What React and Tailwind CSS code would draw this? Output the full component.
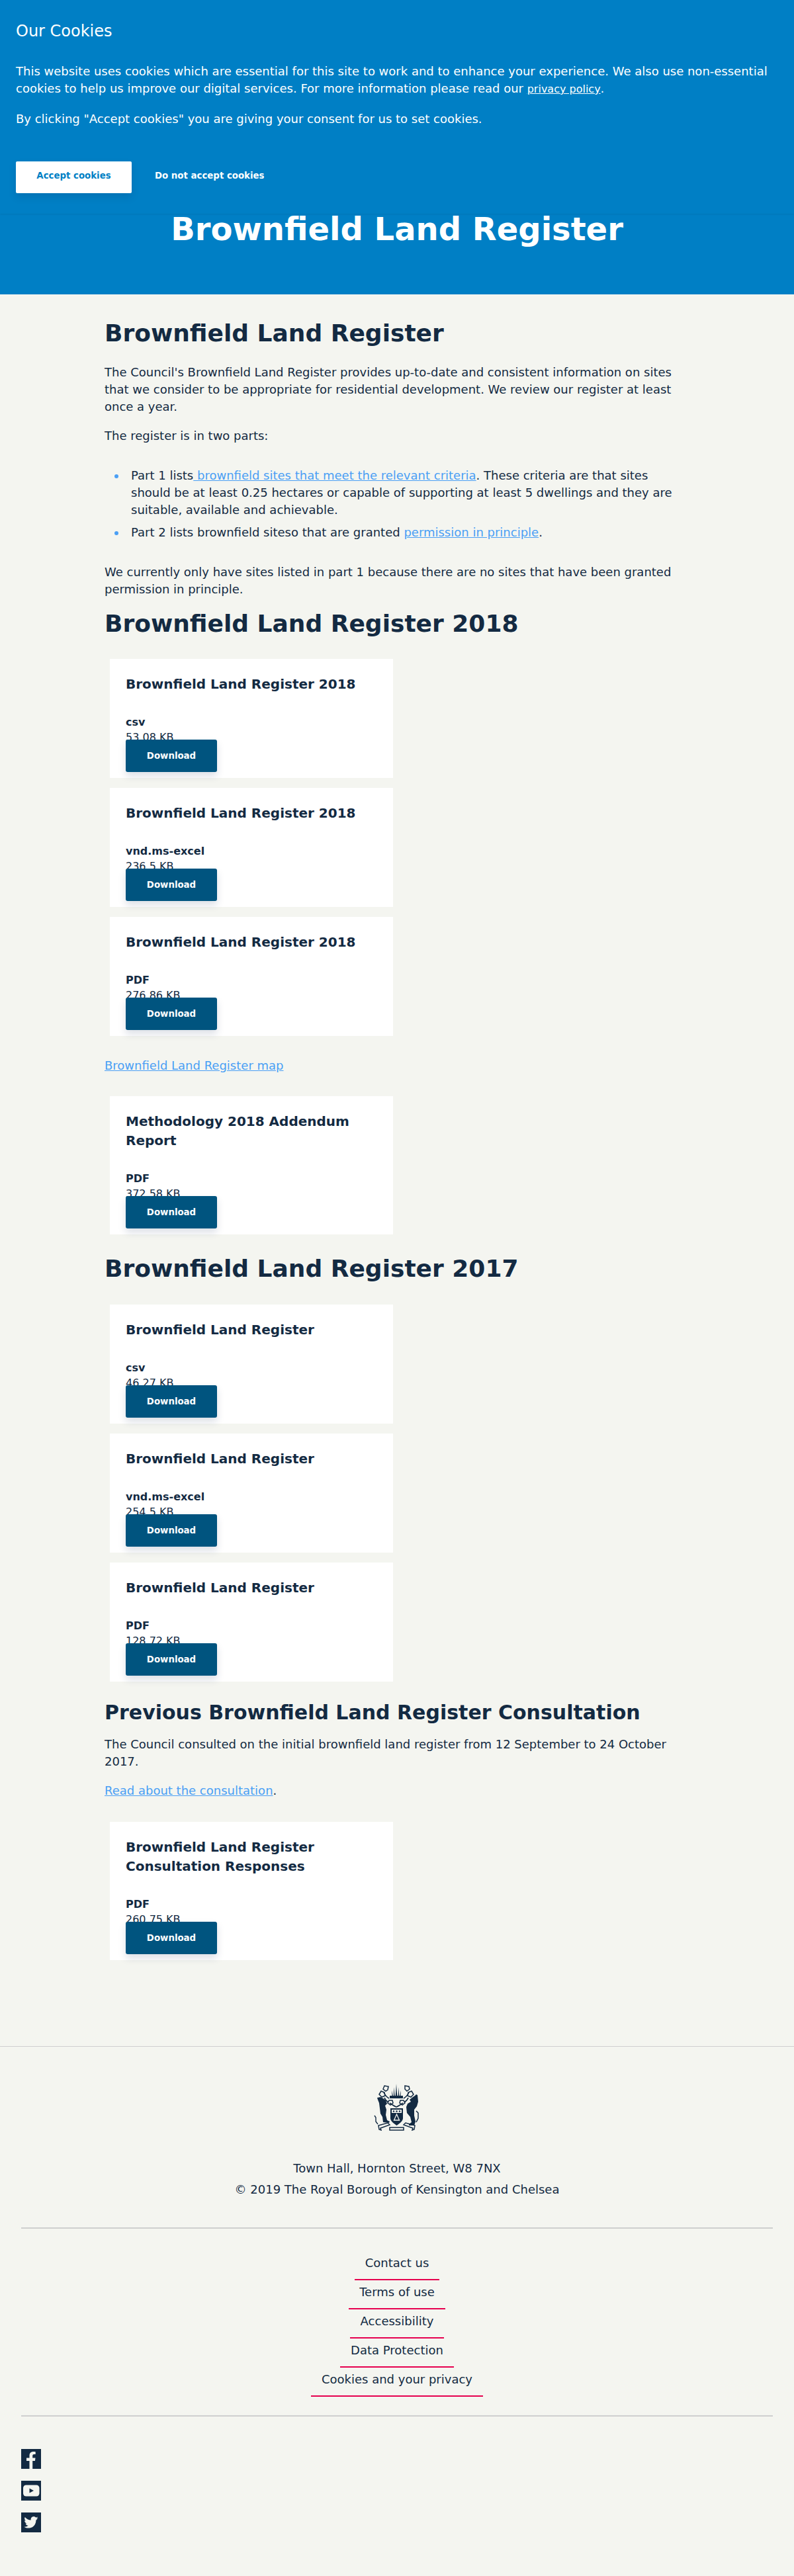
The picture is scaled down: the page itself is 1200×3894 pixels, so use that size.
import React from 'react';

const sections2018 = [
  { title: 'Brownfield Land Register 2018', type: 'csv', size: '53.08 KB' },
  { title: 'Brownfield Land Register 2018', type: 'vnd.ms-excel', size: '236.5 KB' },
  { title: 'Brownfield Land Register 2018', type: 'PDF', size: '276.86 KB' },
];

const sections2017 = [
  { title: 'Brownfield Land Register', type: 'csv', size: '46.27 KB' },
  { title: 'Brownfield Land Register', type: 'vnd.ms-excel', size: '254.5 KB' },
  { title: 'Brownfield Land Register', type: 'PDF', size: '128.72 KB' },
];

const footerLinks = ['Contact us', 'Terms of use', 'Accessibility', 'Data Protection', 'Cookies and your privacy'];

const bullet = "relative before:absolute before:top-[11px] before:left-[-25px] before:h-[6px] before:w-[6px] before:rounded-full before:bg-[#4a9ff5] before:content-['']";

function Card({ title, type, size, tall }) {
  return (
    <div className={`ml-2 w-[428px] bg-white px-6 pt-6 ${tall ? 'h-[209px]' : 'h-[180px]'}`}>
      <h3 className="text-[20px] leading-[29px] font-bold tracking-normal">{title}</h3>
      <div className="mt-[30px] text-[16px] leading-[26px] font-bold">{type}</div>
      <div className="mt-[-3px] h-[26px] text-[16px] leading-[26px]">{size}</div>
      <a className="relative mt-[-10px] flex h-[49px] w-[138px] items-center justify-center rounded-[3px] bg-[#00547f] text-[13.33px] font-bold text-white shadow-[0_6px_12px_rgba(20,40,90,0.15)]">
        Download
      </a>
    </div>
  );
}

function Crest() {
  return (
    <svg width="70" height="71" viewBox="0 0 70 71" fill="#132a42">
      {/* plume and crown */}
      <path d="M34 0l1.2 18h-2.4zM30 5l1.6 13h-1.6zM38 5l-1.6 13h1.6zM27 10l2 8h-1.4zM41 10l-2 8h1.4z" />
      <path d="M24 18h20v4H24z" />
      {/* branches */}
      <path d="M23 22c-4-2-6-5-8-9M45 22c4-2 6-5 8-9M22 28c-3-2-5-4-6-7M46 28c3-2 5-4 6-7M24 29c3 2 7 5 10 6 3-1 7-4 10-6" fill="none" stroke="#132a42" strokeWidth="1.6" />
      <path d="M16 3l6 1-1 5-3 2-4-3zM47 3l6 1 1 4-4 3-3-3zM11 11l5 2 1 5-5 2-4-4zM57 11l-5 2-1 5 5 2 4-4zM23 25l5 0 1 4-4 3-4-3zM45 25l-5 0-1 4 4 3 4-3z" fill="none" stroke="#132a42" strokeWidth="1.5" />
      {/* bear */}
      <path d="M5 21l5-1 4 2 4 3 2 5-3 3 2 6-1 8 2 8 4 2-1 2-9-1-1-8-3-5-1-8-1-8-2-5z" />
      <path d="M1 48l2 3v6l3 4" fill="none" stroke="#132a42" strokeWidth="1.4" />
      {/* lion */}
      <path d="M66 17l1 10-2 7-4 5 0 9 2 9-2 6-8 0 0-2 4-3-2-8-5-6-1-9 2-5 5-3-2-3 5-4 3-2 2-2z" />
      <path d="M64 41l3 3 0 8-3 6" fill="none" stroke="#132a42" strokeWidth="1.5" />
      {/* shield */}
      <path d="M25 37h19v15c0 4-5 8-9.500 11-4.500-3-9.500-7-9.500-11z" />
      <path d="M27 39h15v5H27z" fill="#f4f5f0" />
      <circle cx="30" cy="41.500" r="1.300" />
      <circle cx="34.500" cy="41.500" r="1.300" />
      <circle cx="39" cy="41.500" r="1.300" />
      <path d="M34.500 46l4 9h-8z" fill="none" stroke="#f4f5f0" strokeWidth="1.300" />
      {/* scroll */}
      <path d="M7 63l14-4 3 3-14 5 1 3-3-1zM62 63l-14-4-3 3 14 5-1 3 3-1zM24 66h21v4H24z" fill="none" stroke="#132a42" strokeWidth="1.500" />
    </svg>
  );
}

function FacebookIcon() {
  return (
    <svg width="30" height="30" viewBox="0 0 30 30">
      <rect width="30" height="30" fill="#132a42" />
      <path d="M12.500 30V18H8v-4.500h4.500V10c0-4 2.500-6 6-6 1.200 0 2.500.1 3.200.2v3.800h-2.200c-1.800 0-2.300 1-2.300 2.300v3.200h4.300l-.6 4.500h-3.700v12z" fill="#f4f5f0" />
    </svg>
  );
}

function YoutubeIcon() {
  return (
    <svg width="30" height="30" viewBox="0 0 30 30">
      <rect width="30" height="30" fill="#132a42" />
      <rect x="3" y="6.500" width="24.500" height="17" rx="4.500" fill="#f4f5f0" />
      <path d="M12.500 11.500l6.500 3.500-6.500 3.500z" fill="#132a42" />
    </svg>
  );
}

function TwitterIcon() {
  return (
    <svg width="30" height="30" viewBox="0 0 24 24">
      <rect width="24" height="24" fill="#132a42" />
      <path d="M20.500 6.500c-.6.3-1.300.5-2 .6.700-.4 1.300-1.100 1.500-1.900-.7.400-1.400.7-2.200.8a3.500 3.500 0 0 0-6 3.200c-2.900-.1-5.500-1.500-7.200-3.700-.9 1.600-.5 3.600 1.100 4.700-.6 0-1.100-.2-1.600-.4 0 1.700 1.200 3.100 2.800 3.500-.5.100-1 .2-1.600.1.400 1.400 1.700 2.400 3.300 2.400a7 7 0 0 1-5.200 1.500c4.700 3 11 1.500 13.400-3.200.8-1.500 1.200-3.100 1.100-4.800.6-.5 1.200-1.100 1.600-1.800z" fill="#f4f5f0" />
    </svg>
  );
}

export default function App() {
  return (
    <div className="relative min-h-[3894px] bg-[#f4f5f0] font-['DejaVu_Sans',sans-serif] text-[18px] leading-[26px] text-[#132a42]">
      {/* cookie banner sits over the page header */}
      <div className="absolute top-0 left-0 h-[323px] w-full bg-[#007fc5] px-6 pt-[30px] text-white shadow-[0_1px_2px_rgba(0,0,0,0.08)]">
        <div className="text-[24px] leading-[34px]">Our Cookies</div>
        <p className="mt-[31px]">
          This website uses cookies which are essential for this site to work and to enhance your experience. We also use non-essential cookies to help us improve our digital services. For more information please read our{' '}
          <a className="text-[16px] underline">privacy policy</a>.
        </p>
        <p className="mt-[19px]">By clicking "Accept cookies" you are giving your consent for us to set cookies.</p>
        <div className="mt-[51px] flex items-center">
          <a className="flex h-[48px] w-[175px] items-center justify-center rounded-[2px] bg-white pb-1 text-[13.33px] font-bold text-[#007fc5] shadow-[0_6px_12px_rgba(20,40,90,0.15)]">
            Accept cookies
          </a>
          <a className="ml-[35px] pb-1 text-[13.33px] font-bold">Do not accept cookies</a>
        </div>
      </div>

      <header className="flex h-[445px] items-start justify-center bg-[#007fc5] pt-[308px]">
        <h1 className="text-[48px] leading-[76px] font-bold text-white">Brownfield Land Register</h1>
      </header>

      <main className="ml-[158px] w-[860px] pt-[31px]">
        <h1 className="text-[36px] leading-[56px] font-bold">Brownfield Land Register</h1>
        <p className="mt-[18px]">
          The Council's Brownfield Land Register provides up-to-date and consistent information on sites that we consider to be appropriate for residential development. We review our register at least once a year.
        </p>
        <p className="mt-[18px]">The register is in two parts:</p>
        <ul className="mt-[34px] pl-10">
          <li className={bullet}>
            Part 1 lists<a className="text-[#4a9ff5] underline"> brownfield sites that meet the relevant criteria</a>. These criteria are that sites should be at least 0.25 hectares or capable of supporting at least 5 dwellings and they are suitable, available and achievable.
          </li>
          <li className={`mt-2 ${bullet}`}>
            Part 2 lists brownfield siteso that are granted <a className="text-[#4a9ff5] underline">permission in principle</a>.
          </li>
        </ul>
        <p className="mt-[34px]">We currently only have sites listed in part 1 because there are no sites that have been granted permission in principle.</p>
        <h2 className="mt-[11px] text-[36px] leading-[56px] font-bold">Brownfield Land Register 2018</h2>

        <div className="mt-[25px] flex flex-col gap-[15px]">
          {sections2018.map((s) => (
            <Card key={s.type} {...s} />
          ))}
        </div>
        <p className="mt-[32px]">
          <a className="text-[#4a9ff5] underline">Brownfield Land Register map</a>
        </p>
        <div className="mt-[33px]">
          <Card tall title="Methodology 2018 Addendum Report" type="PDF" size="372.58 KB" />
        </div>

        <h2 className="mt-[24px] text-[36px] leading-[56px] font-bold">Brownfield Land Register 2017</h2>
        <div className="mt-[26px] flex flex-col gap-[15px]">
          {sections2017.map((s) => (
            <Card key={s.type} {...s} />
          ))}
        </div>

        <h2 className="mt-[24px] w-[900px] text-[30px] leading-[45px] font-bold">Previous Brownfield Land Register Consultation</h2>
        <p className="mt-[13px]">The Council consulted on the initial brownfield land register from 12 September to 24 October 2017.</p>
        <p className="mt-[18px]">
          <a className="text-[#4a9ff5] underline">Read about the consultation</a>.
        </p>
        <div className="mt-[34px]">
          <Card tall title="Brownfield Land Register Consultation Responses" type="PDF" size="260.75 KB" />
        </div>
      </main>

      <footer className="mt-[130px] border-t border-[#cfcfcf] px-8 pt-[56px]">
        <div className="flex justify-center">
          <Crest />
        </div>
        <div className="mt-[44px] text-center">
          <p>Town Hall, Hornton Street, W8 7NX</p>
          <p className="mt-[6px]">© 2019 The Royal Borough of Kensington and Chelsea</p>
        </div>
        <div className="mt-[44px] border-t-2 border-[#cfcfcf] pt-[34px] pb-[28px]">
          <ul className="flex flex-col items-center">
            {footerLinks.map((l) => (
              <li key={l} className="h-[44px] border-b-2 border-[#e6004f] px-4 pt-[5px] text-center">
                {l}
              </li>
            ))}
          </ul>
        </div>
        <div className="flex flex-col gap-[18px] border-t-2 border-[#cfcfcf] pt-[49px]">
          <FacebookIcon />
          <YoutubeIcon />
          <TwitterIcon />
        </div>
      </footer>
    </div>
  );
}
